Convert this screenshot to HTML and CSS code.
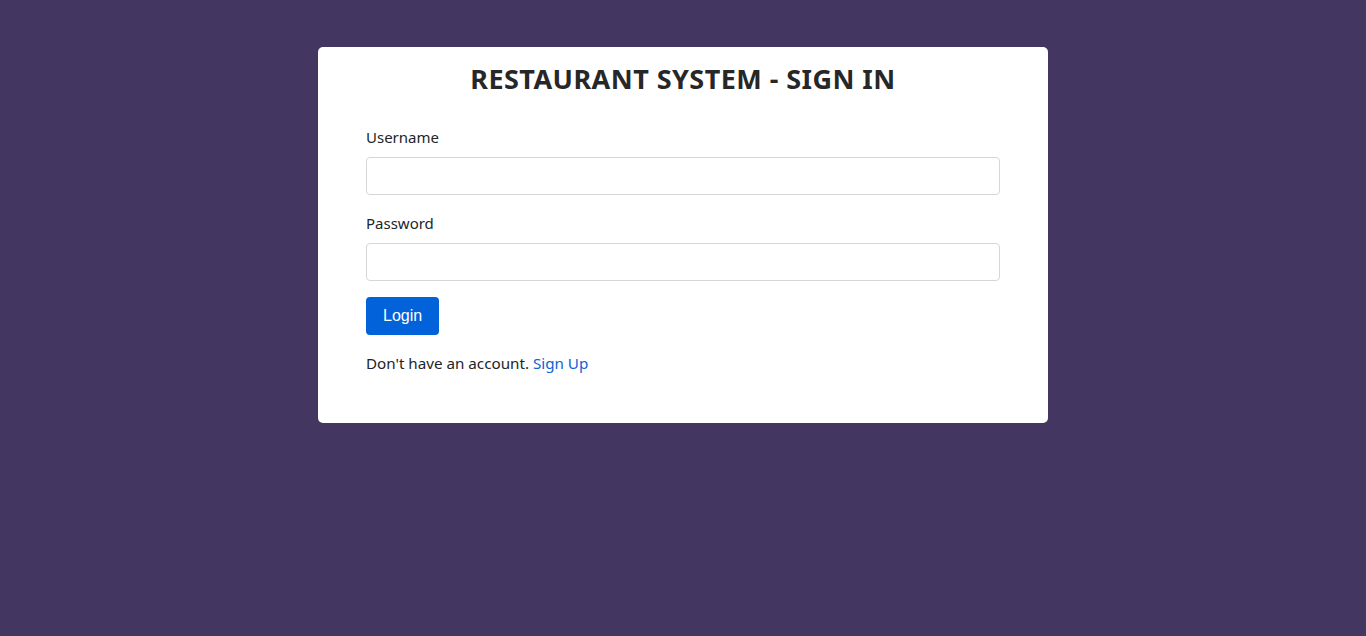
FILE: index.html
```html
<!DOCTYPE html>
<html lang="en">
<head>
<meta charset="utf-8">
<title>Restaurant System - Sign In</title>
<link rel="stylesheet" href="styles.css">
</head>
<body>
<main class="page">
  <section class="card">
    <h1 class="title">RESTAURANT SYSTEM - SIGN IN</h1>
    <form class="form">
      <div class="field">
        <label class="label" for="username">Username</label>
        <input class="input" id="username" type="text">
      </div>
      <div class="field">
        <label class="label" for="password">Password</label>
        <input class="input" id="password" type="password">
      </div>
      <button class="btn" type="button">Login</button>
      <p class="note">Don't have an account. <a class="link" href="#">Sign Up</a></p>
    </form>
  </section>
</main>
</body>
</html>
```

FILE: styles.css
```css
html, body {
  margin: 0;
  padding: 0;
  height: 100%;
}
body {
  background: #433660;
  font-family: "Noto Sans", "Open Sans", sans-serif;
  color: #212529;
}
.page {
  display: flex;
  justify-content: center;
  padding-top: 47px;
}
.card {
  width: 730px;
  box-sizing: border-box;
  background: #fff;
  border-radius: 5px;
  padding: 15px 48px 48px;
}
.title {
  margin: 0;
  text-align: center;
  font-size: 27px;
  line-height: 33px;
  font-weight: 700;
  color: #272727;
  letter-spacing: 0.45px;
}
.form {
  margin-top: 30px;
  display: flex;
  flex-direction: column;
}
.field {
  display: flex;
  flex-direction: column;
  margin-bottom: 16px;
}
.label {
  font-size: 15px;
  line-height: 24px;
  margin-bottom: 8px;
}
.input {
  height: 38px;
  box-sizing: border-box;
  border: 1px solid #d6d6d6;
  border-radius: 4px;
  padding: 6px 12px;
  font-size: 16px;
  background: #fff;
}
.btn {
  align-self: flex-start;
  height: 38px;
  padding: 0 17px;
  border: none;
  border-radius: 4px;
  background: #0262d9;
  color: #fff;
  font-family: "Liberation Sans", Arial, sans-serif;
  font-size: 16px;
}
.note {
  margin: 16px 0 0;
  font-size: 15.2px;
  line-height: 24px;
}
.link {
  color: #0b63d4;
  text-decoration: none;
}
```
